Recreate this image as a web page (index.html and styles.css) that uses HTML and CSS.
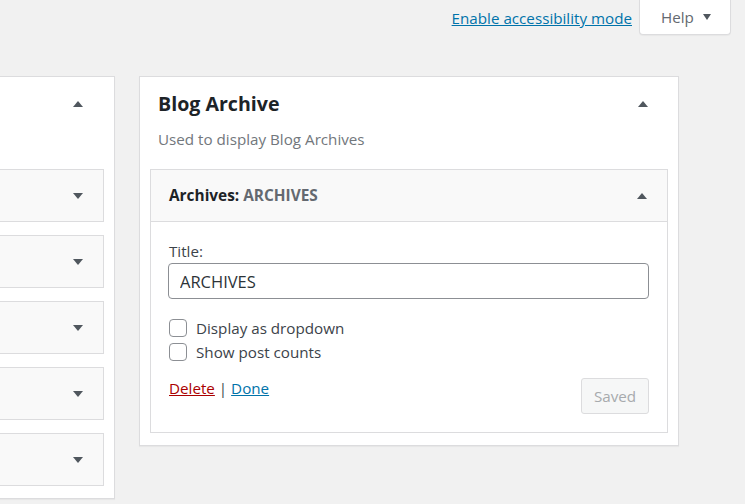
FILE: index.html
```html
<!DOCTYPE html>
<html lang="en">
<head>
<meta charset="utf-8">
<title>Widgets</title>
<link rel="stylesheet" href="styles.css">
</head>
<body>
<div class="topbar">
  <a class="a11y-link" href="#">Enable accessibility mode</a>
  <button class="help-btn" type="button">Help <span class="tri tri-down tri-small"></span></button>
</div>
<div class="columns">
  <section class="panel panel-left">
    <div class="panel-head">
      <div class="panel-text"></div>
      <span class="toggle"><span class="tri tri-up"></span></span>
    </div>
    <div class="area-list">
      <div class="area-item"><span class="toggle"><span class="tri tri-down"></span></span></div>
      <div class="area-item"><span class="toggle"><span class="tri tri-down"></span></span></div>
      <div class="area-item"><span class="toggle"><span class="tri tri-down"></span></span></div>
      <div class="area-item"><span class="toggle"><span class="tri tri-down"></span></span></div>
      <div class="area-item"><span class="toggle"><span class="tri tri-down"></span></span></div>
    </div>
  </section>
  <section class="panel panel-right">
    <div class="panel-head">
      <div class="panel-text">
        <h2 class="panel-title">Blog Archive</h2>
        <p class="panel-desc">Used to display Blog Archives</p>
      </div>
      <span class="toggle"><span class="tri tri-up"></span></span>
    </div>
    <div class="widget">
      <div class="widget-head">
        <span class="widget-name">Archives: <span class="widget-sub">ARCHIVES</span></span>
        <span class="toggle"><span class="tri tri-up"></span></span>
      </div>
      <div class="widget-body">
        <label class="field-label" for="title">Title:</label>
        <input class="text-input" id="title" type="text" value="ARCHIVES">
        <div class="checks">
          <label class="check-row"><input type="checkbox" class="checkbox"> Display as dropdown</label>
          <label class="check-row"><input type="checkbox" class="checkbox"> Show post counts</label>
        </div>
        <div class="widget-foot">
          <div class="actions"><a href="#" class="link-delete">Delete</a> <span class="sep">|</span> <a href="#" class="link-done">Done</a></div>
          <button class="saved-btn" type="button" disabled>Saved</button>
        </div>
      </div>
    </div>
  </section>
</div>
</body>
</html>
```
FILE: styles.css
```css
* { box-sizing: border-box; }
html, body { margin: 0; padding: 0; }
body {
  background: #f1f1f1;
  font-family: "Open Sans", "Noto Sans", sans-serif;
  font-size: 15.2px;
  color: #3c434a;
  width: 745px;
  height: 504px;
  overflow: hidden;
}
.topbar {
  height: 76px;
  display: flex;
  justify-content: flex-end;
  align-items: flex-start;
  padding-right: 14px;
}
.a11y-link {
  margin-top: 8px;
  margin-right: 7px;
  line-height: 20px;
  color: #0073aa;
  text-decoration: underline;
}
.help-btn {
  width: 92px;
  height: 35px;
  background: #fff;
  border: 1px solid #dcdcde;
  border-top: none;
  border-radius: 0 0 4px 4px;
  font: inherit;
  color: #646970;
  display: flex;
  align-items: center;
  justify-content: center;
  gap: 9px;
  padding: 0 0 0 2px;
  box-shadow: 0 1px 1px rgba(0,0,0,0.04);
}
.tri { display: block; width: 0; height: 0; }
.tri-up {
  border-left: 5px solid transparent;
  border-right: 5px solid transparent;
  border-bottom: 6px solid #50575e;
}
.tri-down {
  border-left: 5px solid transparent;
  border-right: 5px solid transparent;
  border-top: 6px solid #50575e;
}
.tri-small { border-left-width: 4.5px; border-right-width: 4.5px; border-top-width: 6px; }
.toggle {
  width: 10px;
  height: 24px;
  display: flex;
  align-items: center;
  justify-content: center;
  flex: none;
}
.columns {
  display: flex;
  align-items: flex-start;
  gap: 24px;
  margin-left: -185px;
}
.panel {
  background: #fff;
  border: 1px solid #dcdcde;
  box-shadow: 0 1px 1px rgba(0,0,0,0.04);
}
.panel-left { width: 300px; }
.panel-right { width: 540px; }
.panel-head {
  display: flex;
  justify-content: space-between;
  align-items: flex-start;
  padding: 15px 30px 0 18px;
}
.panel-left .panel-head { height: 92px; padding-right: 31px; }
.panel-title {
  margin: 0;
  font-size: 19.6px;
  line-height: 24px;
  font-weight: 700;
  color: #1d2327;
}
.panel-desc {
  margin: 13px 0 20px;
  line-height: 20px;
  color: #72777c;
}
.area-list {
  display: flex;
  flex-direction: column;
  gap: 13px;
  padding: 0 10px 12px;
}
.area-item {
  height: 53px;
  background: #f9f9f9;
  border: 1px solid #dcdcde;
  display: flex;
  align-items: center;
  justify-content: flex-end;
  padding-right: 20px;
}
.widget {
  margin: 0 10px 12px;
  border: 1px solid #dcdcde;
  background: #fff;
}
.widget-head {
  height: 52px;
  background: #f9f9f9;
  border-bottom: 1px solid #dcdcde;
  display: flex;
  align-items: center;
  justify-content: space-between;
  padding: 0 20px 0 18px;
}
.widget-name { font-weight: 700; color: #1d2327; font-size: 15.4px; }
.widget-sub { color: #646970; }
.widget-body {
  padding: 19px 18px 18px 17px;
  display: flex;
  flex-direction: column;
}
.field-label {
  line-height: 20px;
  padding-left: 1px;
  color: #3c434a;
}
.text-input {
  margin-top: 2px;
  width: 481px;
  height: 36px;
  border: 1px solid #8c8f94;
  border-radius: 4px;
  padding: 0 11px;
  font: inherit;
  font-size: 16.5px;
  color: #2c3338;
  background: #fff;
}
.checks { margin-top: 17px; display: flex; flex-direction: column; }
.check-row {
  height: 24px;
  display: flex;
  align-items: center;
  gap: 9px;
  padding-left: 1px;
  color: #3c434a;
}
.checkbox {
  appearance: none;
  -webkit-appearance: none;
  margin: 0;
  width: 18px;
  height: 18px;
  border: 1px solid #8c8f94;
  border-radius: 4px;
  background: #fff;
}
.widget-foot {
  margin-top: 14px;
  display: flex;
  justify-content: space-between;
  align-items: flex-start;
}
.actions { line-height: 20px; padding-left: 1px; color: #3c434a; }
.link-delete { color: #a00; text-decoration: underline; }
.link-done { color: #0073aa; text-decoration: underline; }
.saved-btn {
  width: 68px;
  height: 36px;
  background: #f6f7f7;
  border: 1px solid #dcdcde;
  border-radius: 3px;
  color: #a7aaad;
  font: inherit;
  padding: 0;
}
```
